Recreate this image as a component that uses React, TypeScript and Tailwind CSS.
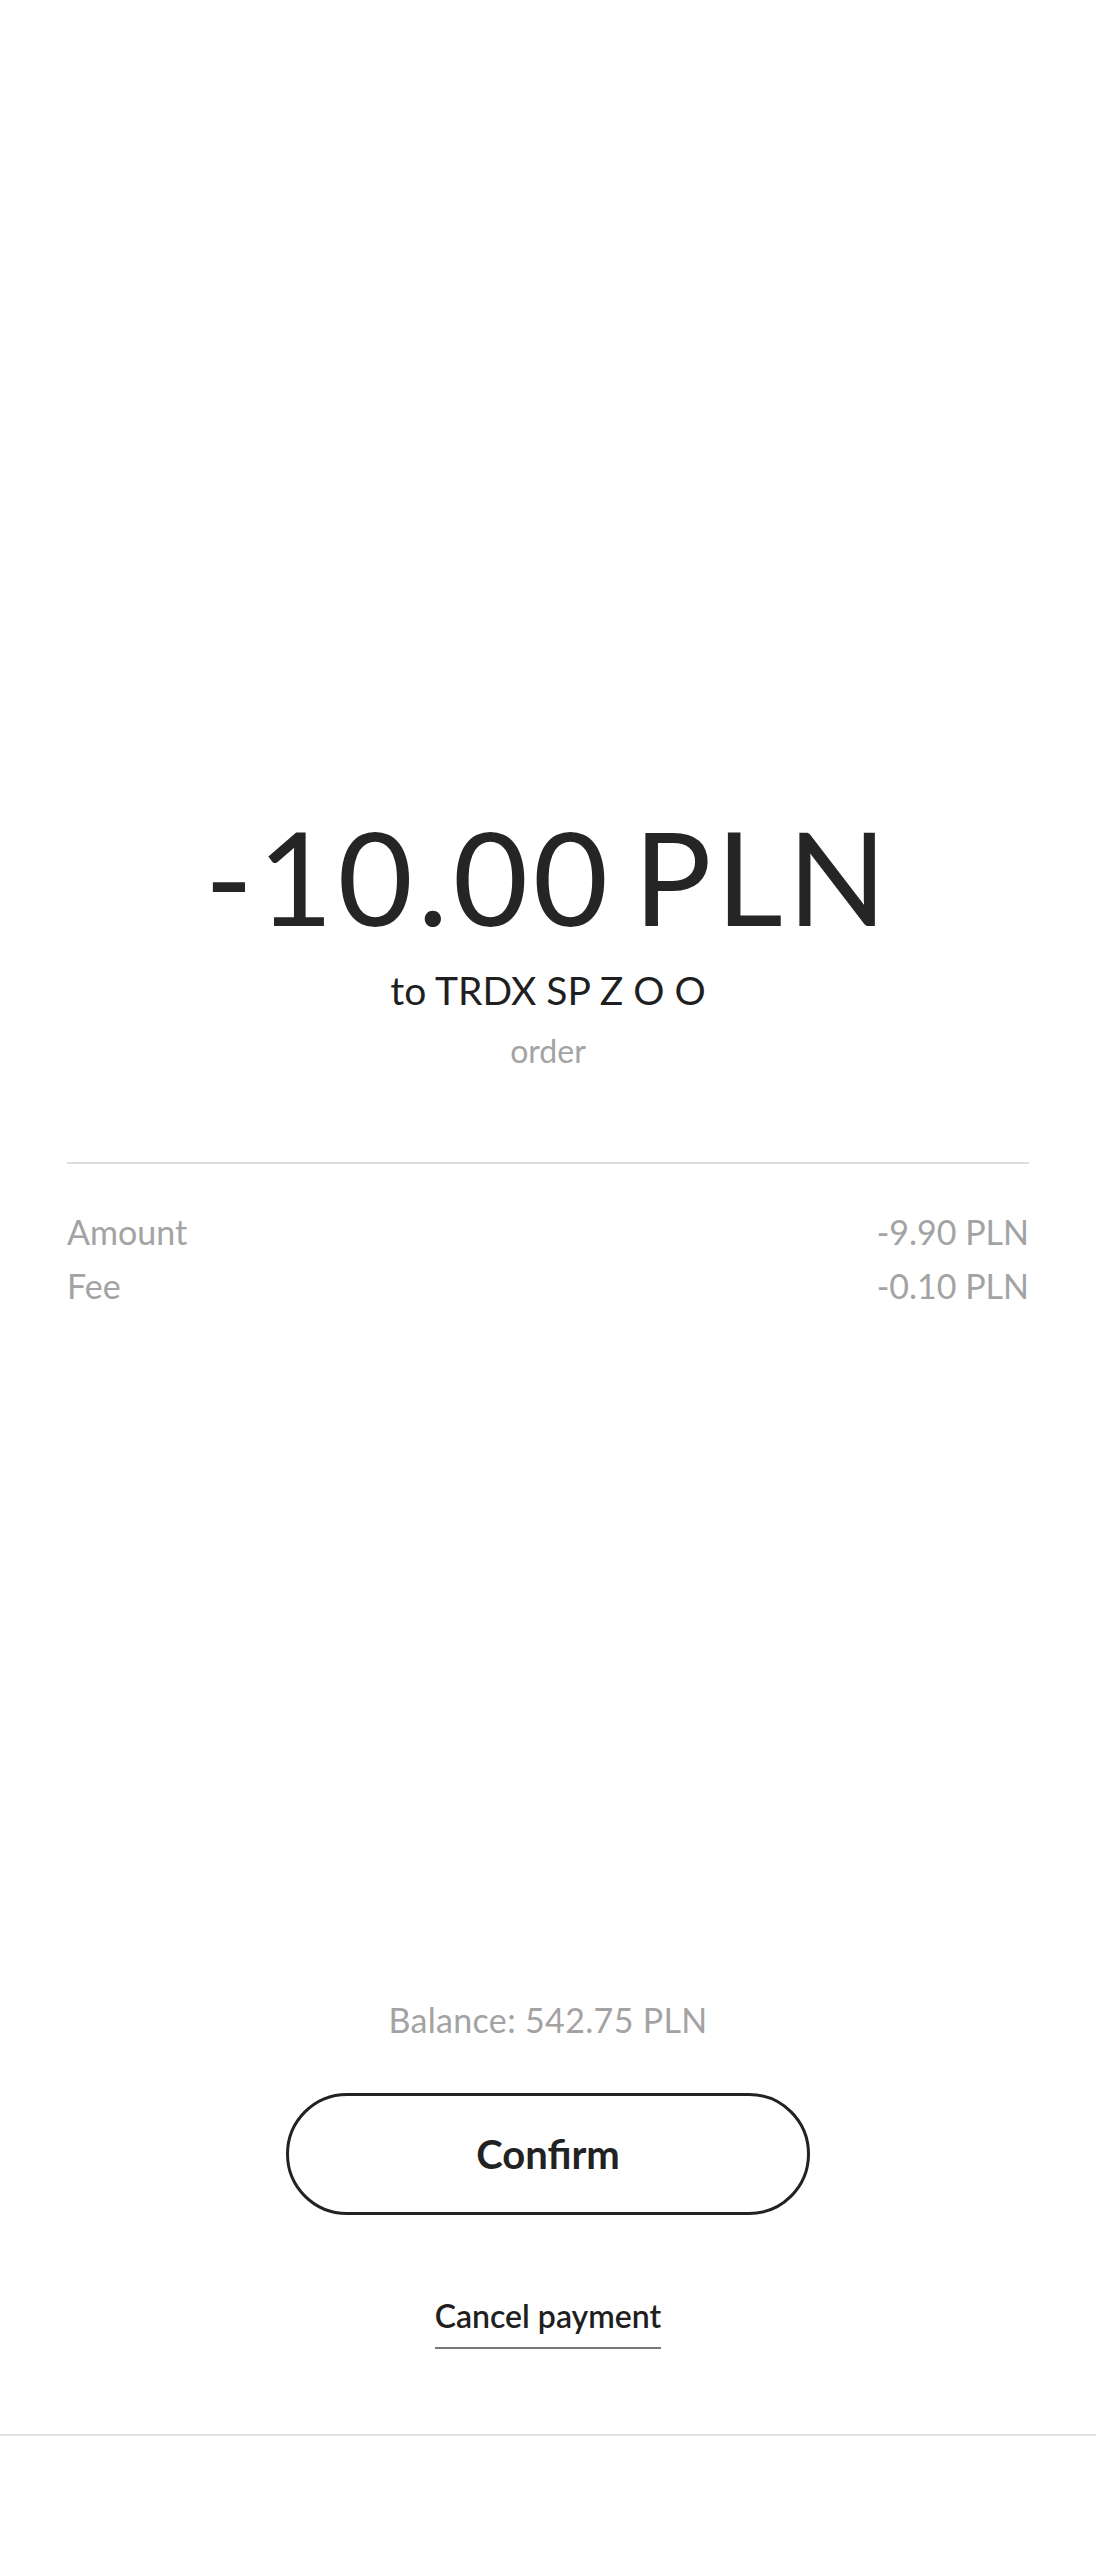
import type { FC } from "react";

interface Line {
  label: string;
  value: string;
}

const lines: Line[] = [
  { label: "Amount", value: "-9.90 PLN" },
  { label: "Fee", value: "-0.10 PLN" },
];

const App: FC = () => {
  return (
    <div
      className="flex h-[2560px] flex-col bg-white text-[#222]"
      style={{ fontFamily: "Lato, 'Noto Sans', sans-serif" }}
    >
      {/* Payment summary */}
      <div className="flex flex-col items-center pt-[811px]">
        <h1 className="text-[130px] leading-[130px] font-normal tracking-[0.035em] text-[#252525]">
          -10.00&thinsp;PLN
        </h1>
        <p className="mt-[25px] text-[39px] leading-[48px] text-[#1f1f1f]">
          to TRDX SP Z O O
        </p>
        <p className="mt-[17px] text-[32px] leading-[40px] text-[#a3a3a3]">
          order
        </p>
      </div>

      {/* Breakdown */}
      <div className="px-[67px]">
        <div className="mt-[91px] h-[2px] bg-[#dedede]" />
        <div className="mt-[41px]">
          {lines.map((l) => (
            <div
              key={l.label}
              className="flex items-center justify-between text-[34px] leading-[54px] text-[#a3a3a3]"
            >
              <span>{l.label}</span>
              <span>{l.value}</span>
            </div>
          ))}
        </div>
      </div>

      {/* Actions */}
      <div className="mt-auto flex flex-col items-center">
        <p className="text-[34px] leading-[40px] tracking-[0.01em] text-[#a3a3a3]">
          Balance: 542.75 PLN
        </p>
        <button className="mt-[53px] flex h-[122px] w-[524px] items-center justify-center rounded-full border-[3px] border-[#222] text-[40px] font-bold text-[#222]">
          Confirm
        </button>
        <button className="mt-[83px] border-b-2 border-[#777] pb-[13px] text-[32px] leading-[36px] font-semibold text-[#1f1f1f]">
          Cancel payment
        </button>
        <div className="mt-[85px] h-[2px] w-full bg-[#e3e3e3]" />
        <div className="h-[124px]" />
      </div>
    </div>
  );
};

export default App;
